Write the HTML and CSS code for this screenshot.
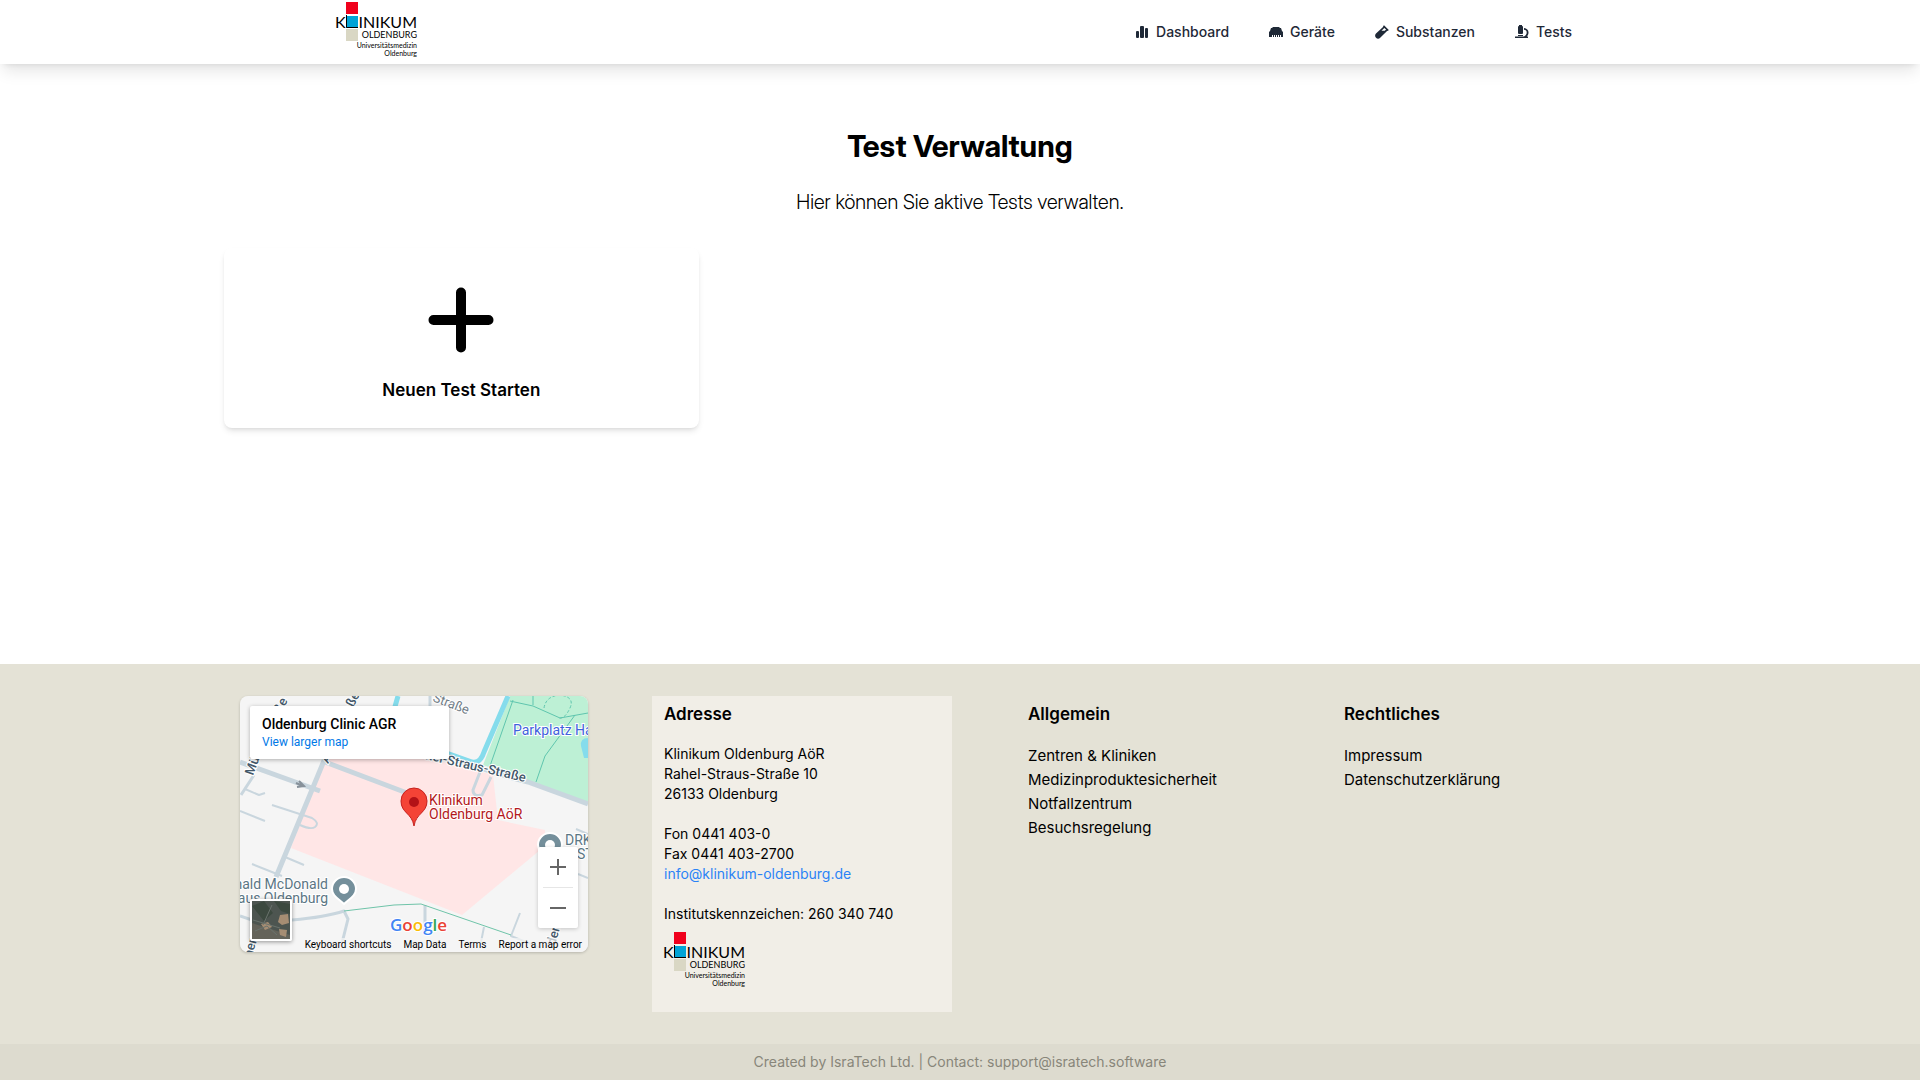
FILE: index.html
```html
<!DOCTYPE html>
<html lang="de">
<head>
<meta charset="utf-8">
<meta name="viewport" content="width=device-width, initial-scale=1">
<title>Test Verwaltung</title>
<link rel="stylesheet" href="styles.css">
</head>
<body>
<header class="header">
  <div class="header-inner">
    <a href="#" class="brand" aria-label="Klinikum Oldenburg">
      <svg class="logo" viewBox="0 0 84 56">
        <rect x="10" y="0" width="12" height="12" fill="#f0001c"/>
        <rect x="10" y="14" width="12" height="12" fill="#00a3d6"/>
        <path d="M10.500 13v12.500H22" fill="none" stroke="#000" stroke-width="1"/>
        <rect x="10" y="27" width="12" height="12" fill="#d9d7c4"/>
        <text class="logo-name" x="-1" y="26">K</text>
        <text class="logo-name" x="81" y="26" text-anchor="end">INIKUM</text>
        <text class="logo-city" x="81" y="36" text-anchor="end">OLDENBURG</text>
        <text class="logo-sub" x="81" y="46" text-anchor="end">Universitätsmedizin</text>
        <text class="logo-sub" x="81" y="54" text-anchor="end">Oldenburg</text>
      </svg>
    </a>
    <nav class="nav">
      <a href="#"><svg viewBox="0 0 14 14"><rect x="1" y="6" width="3" height="7" rx="1"/><rect x="5" y="1" width="4" height="12" rx="1"/><rect x="10" y="3" width="3" height="10" rx="1"/></svg>Dashboard</a>
      <a href="#"><svg viewBox="0 0 14 14"><path d="M4 2h6l1 1h1l1 3 1 1v5h-2v-2h-1v2h-1v-2H9v2H8v-2H7v2H6v-2H5v2H4v-2H3v2H0V7l1-1 1-3h1z"/></svg>Geräte</a>
      <a href="#"><svg viewBox="0 0 14 14"><path fill-rule="evenodd" d="M9 .2 13.800 5l-1 1-.5-.3-7.100 7.100c-1.200 1.200-3 1.200-4.200 0s-1.200-3 0-4.200L8.300 1.700 8 1.200zM9.300 3 6.500 5.800h3.200l1.400-1.300z"/></svg>Substanzen</a>
      <a href="#"><svg viewBox="0 0 14 14"><rect x="3" y="1" width="5" height="8" rx="1"/><rect x="4" y="0" width="3" height="2"/><rect x="3" y="10" width="5" height="1"/><path d="M9 3c2.800.2 4.500 2.200 4.500 4.500 0 1.700-.7 3-1.700 3.900H13V13H0v-1.600h9c1.700-.7 2.700-2.200 2.700-3.900S10.700 4.900 9 4.800z"/></svg>Tests</a>
    </nav>
  </div>
</header>

<main class="main">
  <h1>Test Verwaltung</h1>
  <p class="lead">Hier können Sie aktive Tests verwalten.</p>
  <div class="cards">
    <button type="button" class="card">
      <svg viewBox="0 0 80 80"><path d="M40 12.500v55M12.500 40h55" stroke="#000" stroke-width="10" stroke-linecap="round"/></svg>
      <span>Neuen Test Starten</span>
    </button>
  </div>
</main>

<footer class="footer">
  <div class="footer-grid">
    <section class="map" aria-label="Karte">
      <svg class="map-art" viewBox="0 0 348 256" preserveAspectRatio="xMidYMid slice">
        <rect width="348" height="256" fill="#f5f5f5"/>
        <path d="M270 0h78v106l-105-37z" fill="#bdf0d5"/>
        <path d="M86 58 150 52l103 27 5 45 47 10v16l-83 69L51 152z" fill="#ffe6e6"/>
        <path d="M158 0l-8 28M268 0l-24 56q-4 12-12 10l-34-12" fill="none" stroke="#85dcec" stroke-width="5"/>
        <path d="M348 42q-8 0-7 8l3 12h4z" fill="#85dcec"/>
        <g fill="none" stroke="#5fc5ae" stroke-width="1">
          <path d="M273 4 250 70M270 5l23 5 27 12 28-5M293 0v9M335 19 305 60l-9 26"/>
          <path d="M304 12q2-12 16-13 15 2 10 13t-11 10" stroke-dasharray="3 2"/>
        </g>
        <g fill="none" stroke="#c9d6de" stroke-linejoin="round">
          <path d="M116 0 88 55 36 181M0 66l80 29M85 66l82 31" stroke-width="5"/>
          <path d="M198 57q60 22 90 29l60 22" stroke-width="5"/>
          <path d="M14 79 1 99M0 220l24 8M52 224q34-3 52-9l4 8-6 24M190 0v10M185 209v30M240 76l-7 18q0 7 9 5l9-18" stroke-width="3"/>
          <path d="M5 93l14 6 6-2M0 115l25 10M32 109l40 13q8 5 3 9-4 3-15-2M12 168l30 12M45 161l19 8M280 217l-9 23 30 12M244 231l-3 15M336 133l12 5M338 178l10 4" stroke-width="2"/>
        </g>
        <path d="M104 215l50-6 27-1 90 31" fill="none" stroke="#6fc4a9" stroke-width="1"/>
        <path d="m56 87 7 3M59 85l5 5-7 1" fill="none" stroke="#87919a" stroke-width="2"/>
        <g class="street">
          <text transform="translate(13 80) rotate(-70)">Mü</text>
          <text transform="translate(38 24) rotate(-63)">aße</text>
          <text transform="translate(110 18) rotate(-63)">aße</text>
          <text transform="translate(88 68) rotate(-63)">A</text>
          <text transform="translate(185 63) rotate(13)">hel-Straus-Straße</text>
          <text class="minor" transform="translate(192 5) rotate(21)">Straße</text>
          <text transform="translate(12 262) rotate(-75)">ner</text>
          <text transform="translate(315 250) rotate(-75)">den</text>
        </g>
        <g class="place">
          <text x="273" y="39" fill="#3f62dc">Parkplatz Haarentor</text>
          <text x="88" y="193" text-anchor="end">Ronald McDonald</text>
          <text x="88" y="207" text-anchor="end">Haus Oldenburg</text>
          <text x="325" y="149">DRK</text>
          <text x="337" y="163">ST</text>
          <text x="189" y="109" fill="#b3191d">Klinikum</text>
          <text x="189" y="123" fill="#b3191d">Oldenburg AöR</text>
        </g>
        <g fill="#748f9b" stroke="#fff" stroke-width="2">
          <path d="M104 208c-5-5-12-8-12-15a12 12 0 0 1 24 0c0 7-7 10-12 15z"/><circle cx="104" cy="193" r="5" fill="#fff" stroke="none"/>
          <path d="M310 164c-5-5-12-8-12-15a12 12 0 0 1 24 0c0 7-7 10-12 15z"/><circle cx="310" cy="149" r="5" fill="#fff" stroke="none"/>
        </g>
        <path d="M174 130c-2-13-13-13-13-25a13 13 0 0 1 26 0c0 12-11 12-13 25z" fill="#f44336" stroke="#c5221f" stroke-width="1"/>
        <circle cx="174" cy="106" r="5" fill="#b31217"/>
        <text class="google" x="150" y="235"><tspan fill="#4285f4">G</tspan><tspan fill="#ea4335">o</tspan><tspan fill="#fbbc05">o</tspan><tspan fill="#4285f4">g</tspan><tspan fill="#34a853">l</tspan><tspan fill="#ea4335">e</tspan></text>
      </svg>
      <div class="map-info"><strong>Oldenburg Clinic AGR</strong><a href="#">View larger map</a></div>
      <button type="button" class="map-sat" aria-label="Satellite">
        <svg viewBox="0 0 38 38"><rect width="38" height="38" fill="#4d5550"/><path d="M0 5 12 0l9 12-9 8zM22 0l16 3v10l-9-3z" fill="#3c493f"/><path d="M0 22 38 34v4H0z" fill="#64635a"/><path d="m28 14 8-1 1 9-7 2-4-3zM9 23l7-2 4 5-7 3zM27 28l8 1-1 7-6-2z" fill="#a68d73"/><path d="m1 19 27 8M3 30l12-5 10 9M20 4l-9 20" stroke="#6a736d" fill="none"/></svg>
      </button>
      <div class="map-zoom">
        <button type="button" aria-label="Zoom in"><svg viewBox="0 0 18 18"><path d="M9 1v16M1 9h16"/></svg></button>
        <button type="button" aria-label="Zoom out"><svg viewBox="0 0 18 18"><path d="M1 9h16"/></svg></button>
      </div>
      <div class="map-links"><button type="button">Keyboard shortcuts</button><button type="button">Map Data</button><a href="#">Terms</a><a href="#">Report a map error</a></div>
    </section>
    <section class="col address">
      <h2>Adresse</h2>
      <address>
        <p>Klinikum Oldenburg AöR<br>Rahel-Straus-Straße 10<br>26133 Oldenburg</p>
        <p>Fon 0441 403-0<br>Fax 0441 403-2700<br><a href="mailto:info@klinikum-oldenburg.de">info@klinikum-oldenburg.de</a></p>
        <p>Institutskennzeichen: 260 340 740</p>
      </address>
      <svg class="logo" viewBox="0 0 84 56">
        <rect x="10" y="0" width="12" height="12" fill="#f0001c"/>
        <rect x="10" y="14" width="12" height="12" fill="#00a3d6"/>
        <path d="M10.500 13v12.500H22" fill="none" stroke="#000" stroke-width="1"/>
        <rect x="10" y="27" width="12" height="12" fill="#d9d7c4"/>
        <text class="logo-name" x="-1" y="26">K</text>
        <text class="logo-name" x="81" y="26" text-anchor="end">INIKUM</text>
        <text class="logo-city" x="81" y="36" text-anchor="end">OLDENBURG</text>
        <text class="logo-sub" x="81" y="46" text-anchor="end">Universitätsmedizin</text>
        <text class="logo-sub" x="81" y="54" text-anchor="end">Oldenburg</text>
      </svg>
    </section>
    <section class="col">
      <h2>Allgemein</h2>
      <ul>
        <li><a href="#">Zentren &amp; Kliniken</a></li>
        <li><a href="#">Medizinproduktesicherheit</a></li>
        <li><a href="#">Notfallzentrum</a></li>
        <li><a href="#">Besuchsregelung</a></li>
      </ul>
    </section>
    <section class="col">
      <h2>Rechtliches</h2>
      <ul>
        <li><a href="#">Impressum</a></li>
        <li><a href="#">Datenschutzerklärung</a></li>
      </ul>
    </section>
  </div>
  <p class="credits">Created by IsraTech Ltd. | Contact: support@isratech.software</p>
</footer>
</body>
</html>
```
FILE: styles.css
```css
*, *::before, *::after { box-sizing: border-box; }
h1, h2, p, ul { margin: 0; padding: 0; }
ul { list-style: none; }
a { color: inherit; text-decoration: none; }
button { border: 0; padding: 0; background: none; color: inherit; font: inherit; cursor: pointer; }
svg { display: block; }

body {
  margin: 0;
  min-height: 100vh;
  display: flex;
  flex-direction: column;
  background: #fff;
  color: #000;
  font: 16px/24px Inter, "Liberation Sans", sans-serif;
}
.logo { width: 84px; height: 56px; font-family: Lato, sans-serif; overflow: visible; }
.logo-name { font-size: 16px; }
.logo-city { font-size: 9px; }
.logo-sub { font-size: 7px; }

.header { background: #fff; box-shadow: 0 10px 15px -3px rgba(0, 0, 0, .1), 0 4px 6px -4px rgba(0, 0, 0, .1); }
.header-inner {
  max-width: 1248px;
  min-height: 64px;
  margin: 0 auto;
  padding: 2px 0 6px;
  display: flex;
  justify-content: space-between;
  align-items: center;
}
.nav { display: flex; gap: 16px; }
.nav a {
  display: flex;
  align-items: center;
  gap: 7px;
  padding: 4px 12px 0;
  color: #1f2937;
  font-size: 14px;
  line-height: 20px;
  font-weight: 500;
}
.nav svg { width: 14px; height: 14px; fill: currentColor; }

.main { flex: 1; width: 100%; max-width: 1536px; margin: 0 auto; padding: 64px 32px; }
.main h1 { font-family: "Inter Display", Inter, sans-serif; font-size: 30px; line-height: 36px; font-weight: 700; text-align: center; }
.lead { margin: 24px 0 32px; font-family: "Inter Display", Inter, sans-serif; font-size: 20px; line-height: 28px; font-weight: 300; text-align: center; }
.cards { display: grid; grid-template-columns: repeat(3, 1fr); gap: 24px; }
.card {
  display: flex;
  flex-direction: column;
  align-items: center;
  gap: 16px;
  padding: 32px 24px 24px;
  border-radius: 8px;
  background: #fff;
  box-shadow: 0 4px 6px -1px rgba(0, 0, 0, .1), 0 2px 4px -2px rgba(0, 0, 0, .1);
  font-size: 17px;
  line-height: 28px;
  font-weight: 600;
}
.card svg { width: 80px; height: 80px; }

.footer { background: #e4e2d6; }
.footer-grid {
  max-width: 1504px;
  margin: 0 auto;
  padding: 32px;
  display: grid;
  grid-template-columns: 348fr 300fr 252fr 348fr;
  gap: 64px;
}
.col { padding: 4px 12px 24px; }
.col h2 { margin-bottom: 16px; font-size: 17px; line-height: 28px; font-weight: 600; }
.col ul { font-size: 15px; }
.address { background: #f1eee7; }
address { font-style: normal; font-size: 14px; line-height: 20px; }
address p + p { margin-top: 20px; }
address a { color: #2b83f6; }
.address .logo { margin-top: 8px; }
.credits { padding: 8px; background: #dddbcf; color: #88867a; font-size: 14px; line-height: 20px; text-align: center; }

.map {
  position: relative;
  align-self: start;
  height: 256px;
  overflow: hidden;
  border-radius: 8px;
  box-shadow: 0 1px 3px rgba(0, 0, 0, .2);
  font-family: Roboto, sans-serif;
}
.map-art { width: 100%; height: 100%; }
.street text { font: 500 13px Roboto, sans-serif; fill: #43586a; stroke: #fff; stroke-width: 2px; paint-order: stroke; }
.street .minor { fill: #717d87; font-weight: 400; }
.place text { font: 400 14px Roboto, sans-serif; stroke: #fff; stroke-width: 2px; paint-order: stroke; }
.place text:not([fill]) { fill: #5b7684; }
.google { font: 600 17px "Open Sans", sans-serif; stroke: #fff; stroke-width: 2px; paint-order: stroke; }
.map-info {
  position: absolute;
  top: 10px;
  left: 10px;
  width: 199px;
  padding: 9px 12px 8px;
  display: flex;
  flex-direction: column;
  background: #fff;
  border-radius: 2px;
  box-shadow: 0 1px 4px rgba(0, 0, 0, .3);
}
.map-info strong { font-size: 14px; line-height: 18px; font-weight: 500; }
.map-info a { color: #0078e7; font-size: 12px; line-height: 18px; }
.map-sat {
  position: absolute;
  left: 10px;
  bottom: 11px;
  border: 2px solid #fff;
  border-radius: 2px;
  box-shadow: 0 1px 4px rgba(0, 0, 0, .4);
}
.map-sat svg { width: 38px; height: 38px; }
.map-zoom {
  position: absolute;
  right: 10px;
  bottom: 24px;
  width: 40px;
  background: #fff;
  border-radius: 2px;
  box-shadow: 0 1px 4px rgba(0, 0, 0, .2);
}
.map-zoom button { display: grid; place-items: center; width: 100%; height: 40px; }
.map-zoom button + button::before { content: ""; width: 30px; height: 1px; background: #e6e6e6; }
.map-zoom button + button { height: 41px; grid-template-rows: 1px 1fr; }
.map-zoom svg { width: 18px; height: 18px; fill: none; stroke: #666; stroke-width: 2; }
.map-links {
  position: absolute;
  right: 0;
  bottom: 0;
  display: flex;
  gap: 12px;
  padding: 0 6px;
  background: rgba(245, 245, 245, .7);
  font-size: 10px;
  line-height: 14px;
}
```
